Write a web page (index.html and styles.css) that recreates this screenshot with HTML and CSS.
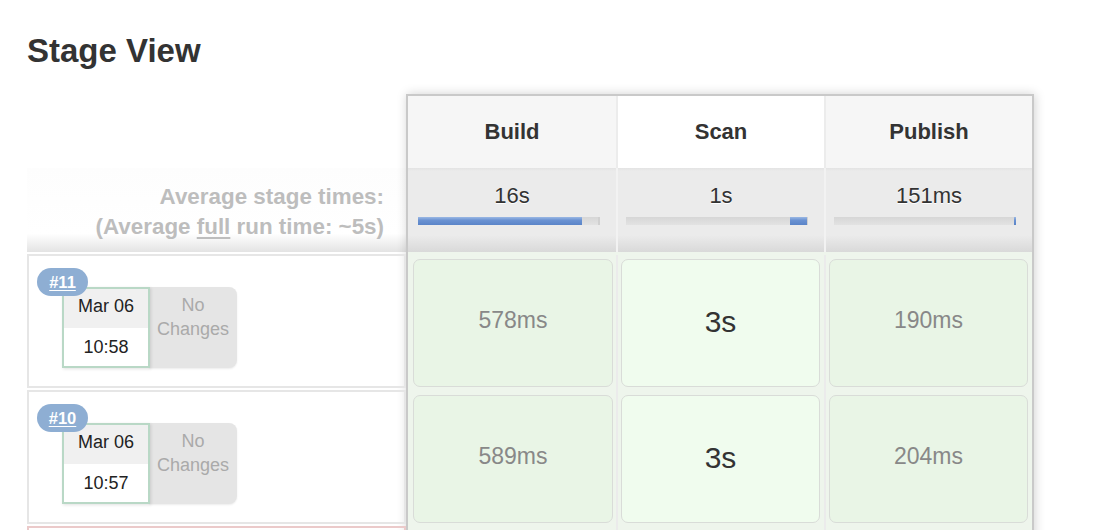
FILE: index.html
```html
<!DOCTYPE html>
<html>
<head>
<meta charset="utf-8">
<title>Stage View</title>
<link rel="stylesheet" href="styles.css">
</head>
<body>
<h2 class="title">Stage View</h2>
<div class="stage-view">
  <div class="runs">
    <div class="runs-head"></div>
    <div class="avg-label">
      <div>Average stage times:</div>
      <div>(Average <u>full</u> run time: ~5s)</div>
    </div>
    <div class="run">
      <a class="badge">#11</a>
      <div class="run-info">
        <div class="date">
          <div class="day">Mar 06</div>
          <div class="time">10:58</div>
        </div>
        <div class="changes">No<br>Changes</div>
      </div>
    </div>
    <div class="run">
      <a class="badge">#10</a>
      <div class="run-info">
        <div class="date">
          <div class="day">Mar 06</div>
          <div class="time">10:57</div>
        </div>
        <div class="changes">No<br>Changes</div>
      </div>
    </div>
    <div class="run run-failed"></div>
  </div>
  <div class="stages">
    <div class="head-row">
      <div class="head">Build</div>
      <div class="head head-alt">Scan</div>
      <div class="head">Publish</div>
    </div>
    <div class="avg-row">
      <div class="avg">
        <div class="avg-time">16s</div>
        <div class="track"><span class="fill" style="margin-left:0;width:164px"></span></div>
      </div>
      <div class="avg">
        <div class="avg-time">1s</div>
        <div class="track"><span class="fill" style="margin-left:164px;width:17px"></span></div>
      </div>
      <div class="avg">
        <div class="avg-time">151ms</div>
        <div class="track"><span class="fill" style="margin-left:180px;width:2px"></span></div>
      </div>
    </div>
    <div class="body">
      <div class="row">
        <div class="cell"><div class="box">578ms</div></div>
        <div class="cell"><div class="box box-hl">3s</div></div>
        <div class="cell"><div class="box">190ms</div></div>
      </div>
      <div class="row">
        <div class="cell"><div class="box">589ms</div></div>
        <div class="cell"><div class="box box-hl">3s</div></div>
        <div class="cell"><div class="box">204ms</div></div>
      </div>
      <div class="row">
        <div class="cell"><div class="box box-failed"></div></div>
        <div class="cell"><div class="box box-failed"></div></div>
        <div class="cell"><div class="box box-failed"></div></div>
      </div>
    </div>
  </div>
</div>
</body>
</html>
```
FILE: styles.css
```css
html, body {
  margin: 0;
  padding: 0;
  background: #fff;
  font-family: "Liberation Sans", Arial, Helvetica, sans-serif;
  color: #333;
}

body {
  padding: 0 27px;
}

.title {
  margin: 31px 0 0;
  font-size: 33px;
  line-height: 40px;
  font-weight: bold;
  color: #333;
}

.stage-view {
  display: flex;
  align-items: flex-start;
  margin-top: 23px;
}

/* left column */
.runs {
  width: 379px;
  display: flex;
  flex-direction: column;
}

.runs-head {
  height: 74px;
}

.avg-label {
  height: 84px;
  box-sizing: border-box;
  padding: 14px 22px 0 0;
  text-align: right;
  font-size: 22.4px;
  line-height: 30px;
  font-weight: bold;
  color: #bdbdbd;
  background: linear-gradient(to bottom, #fdfdfd 0%, #ffffff 78%, #e3e3e3 100%);
}

.avg-label u {
  text-decoration-thickness: 2px;
  text-underline-offset: 3px;
}

.run {
  position: relative;
  height: 134px;
  margin-top: 2px;
  box-sizing: border-box;
  border: 2px solid #e6e6e6;
  padding: 31px 0 0 33px;
}

.run-failed {
  border-color: #ebcaca;
}

.badge {
  position: absolute;
  top: 12px;
  left: 8px;
  z-index: 2;
  width: 51px;
  height: 28px;
  border-radius: 14px;
  background: #8eaed3;
  color: #fff;
  font-size: 16.5px;
  font-weight: bold;
  line-height: 28px;
  text-align: center;
  text-decoration: underline;
  text-underline-offset: 2px;
}

.run-info {
  display: flex;
}

.date {
  width: 88px;
  height: 81px;
  box-sizing: border-box;
  border: 2px solid #b9d8c6;
  background: #fff;
  box-shadow: 1px 1px 3px rgba(0, 0, 0, 0.12);
  font-size: 18px;
  text-align: center;
  color: #222;
  position: relative;
  z-index: 1;
}

.day {
  height: 39px;
  line-height: 35px;
  background: #f0f0f0;
}

.time {
  height: 38px;
  line-height: 38px;
}

.changes {
  width: 88px;
  height: 81px;
  box-sizing: border-box;
  margin-left: -1px;
  padding-top: 6px;
  background: #e5e5e5;
  border-radius: 0 8px 8px 0;
  box-shadow: 0 1px 2px rgba(0, 0, 0, 0.08);
  color: #aaa;
  font-size: 18px;
  line-height: 24px;
  text-align: center;
}

/* stage table */
.stages {
  width: 624px;
  border: 2px solid #c9c9c9;
  border-bottom: none;
  box-shadow: 1px 0 10px rgba(0, 0, 0, 0.18);
  background: #fff;
}

.head-row,
.avg-row,
.row {
  display: grid;
  grid-template-columns: 208px 208px 208px;
}

.head {
  height: 72px;
  line-height: 72px;
  text-align: center;
  font-size: 22px;
  font-weight: bold;
  color: #333;
  background: #f6f6f6;
  border-left: 2px solid #ececec;
}

.head:first-child {
  border-left: none;
}

.head-alt {
  background: #fff;
}

.avg {
  height: 84px;
  box-sizing: border-box;
  padding-top: 13px;
  text-align: center;
  background: linear-gradient(to bottom, #e3e3e3 0px, #ebebeb 3px, #ebebeb 80%, #d9d9d9 100%);
  border-left: 2px solid #f2f2f2;
}

.avg:first-child {
  border-left: none;
}

.avg-time {
  font-size: 22px;
  line-height: 30px;
  color: #333;
  text-shadow: 0 1px 0 #fff;
}

.track {
  display: flex;
  width: 182px;
  height: 8px;
  margin: 6px 0 0 8px;
  background: linear-gradient(to bottom, #d6d6d6, #e2e2e2);
  box-shadow: inset -2px 0 0 #d0d0d0;
}

.avg:first-child .track {
  margin-left: 10px;
}

.fill {
  display: block;
  height: 8px;
  background: linear-gradient(to bottom, #9bb8e4 0%, #6a92d2 40%, #5a84c8 100%);
}

.body {
  padding-top: 3px;
  background: #eef5ec;
}

.row {
  height: 136px;
}

.cell {
  box-sizing: border-box;
  padding: 4px 4px 4px 3px;
  border-left: 2px solid #ebebeb;
}

.cell:first-child {
  border-left: none;
  padding-left: 5px;
  padding-right: 3px;
}

.box {
  height: 128px;
  box-sizing: border-box;
  padding-bottom: 5px;
  border: 1px solid #d9dcd8;
  border-radius: 7px;
  background: #e9f5e6;
  color: #888;
  font-size: 23px;
  display: flex;
  align-items: center;
  justify-content: center;
}

.box-hl {
  background: #f0fcee;
  color: #333;
  font-size: 30px;
  padding-bottom: 3px;
}

.box-failed {
  background: #fbe9e9;
  border-color: #e8c8c8;
}
```
